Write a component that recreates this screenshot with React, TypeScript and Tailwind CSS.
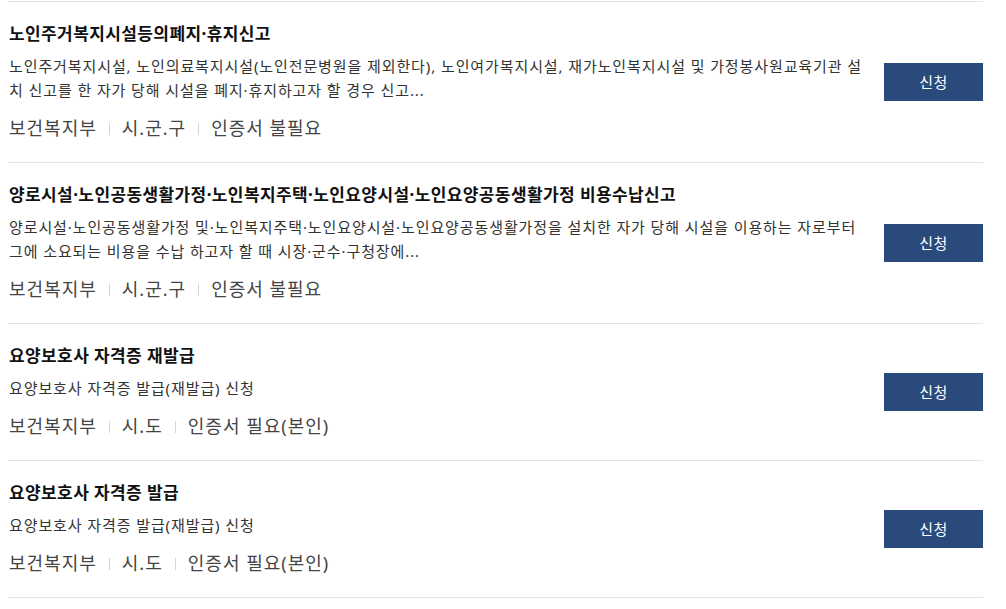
import React from "react"

interface Service {
  title: string
  desc: string
  ministry: string
  agency: string
  cert: string
}

const services: Service[] = [
  {
    title: "노인주거복지시설등의폐지·휴지신고",
    desc: "노인주거복지시설, 노인의료복지시설(노인전문병원을 제외한다), 노인여가복지시설, 재가노인복지시설 및 가정봉사원교육기관 설치 신고를 한 자가 당해 시설을 폐지·휴지하고자 할 경우 신고...",
    ministry: "보건복지부",
    agency: "시.군.구",
    cert: "인증서 불필요",
  },
  {
    title: "양로시설·노인공동생활가정·노인복지주택·노인요양시설·노인요양공동생활가정 비용수납신고",
    desc: "양로시설·노인공동생활가정 및·노인복지주택·노인요양시설·노인요양공동생활가정을 설치한 자가 당해 시설을 이용하는 자로부터 그에 소요되는 비용을 수납 하고자 할 때 시장·군수·구청장에...",
    ministry: "보건복지부",
    agency: "시.군.구",
    cert: "인증서 불필요",
  },
  {
    title: "요양보호사 자격증 재발급",
    desc: "요양보호사 자격증 발급(재발급) 신청",
    ministry: "보건복지부",
    agency: "시.도",
    cert: "인증서 필요(본인)",
  },
  {
    title: "요양보호사 자격증 발급",
    desc: "요양보호사 자격증 발급(재발급) 신청",
    ministry: "보건복지부",
    agency: "시.도",
    cert: "인증서 필요(본인)",
  },
]

const Divider = () => <span className="mr-[12px] ml-[12px] inline-block h-[12px] w-px bg-[#d5d5d5]" />

const ServiceRow = ({ item }: { item: Service }) => {
  return (
    <li className="flex items-center border-b border-[#e2e2e2] pt-5 pb-5">
      <div className="min-w-0 flex-1 pl-px pr-[16px]">
        <h3 className="text-[17px] leading-[24px] font-bold tracking-[0.4px] text-[#111]">{item.title}</h3>
        <p className="mt-2 text-[15px] leading-[24px] tracking-[0.9px] text-[#333]">{item.desc}</p>
        <div className="mt-[13px] flex items-center text-[18px] leading-[27px] tracking-[1px] text-[#444]">
          <span>{item.ministry}</span>
          <Divider />
          <span>{item.agency}</span>
          <Divider />
          <span>{item.cert}</span>
        </div>
      </div>
      <button className="h-[38px] w-[99px] shrink-0 bg-[#2a4a7c] text-[15px] tracking-[0.5px] text-white">신청</button>
    </li>
  )
}

export default function App() {
  return (
    <div
      className="min-h-[609px] bg-white pt-px pl-2 pr-[23px]"
      style={{ fontFamily: '"Noto Sans", "Noto Sans CJK KR", sans-serif' }}
    >
      <ul className="border-t border-[#e2e2e2]">
        {services.map((item, i) => (
          <ServiceRow key={i} item={item} />
        ))}
      </ul>
    </div>
  )
}
